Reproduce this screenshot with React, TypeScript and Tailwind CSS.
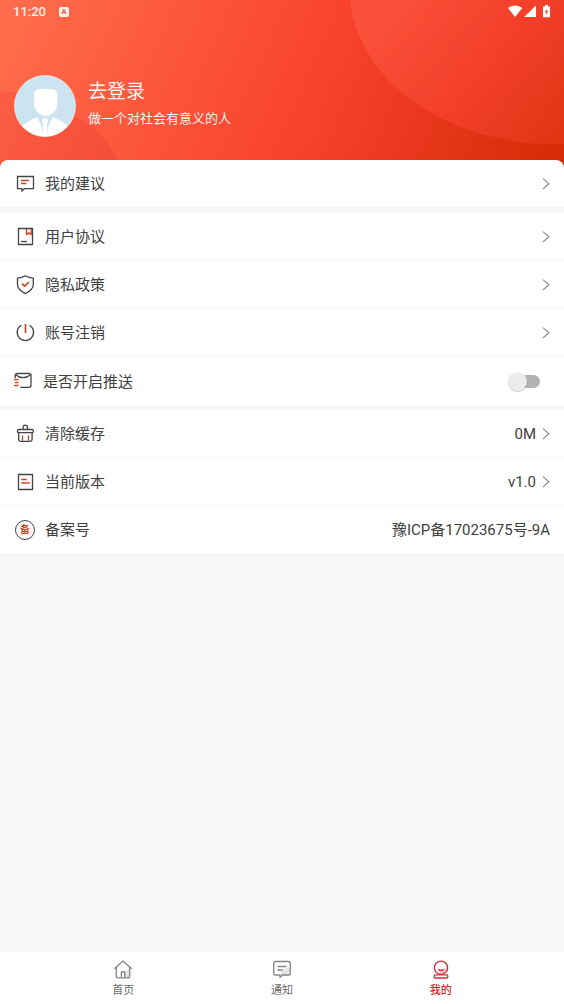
import React, { useState } from 'react';
import clsx from 'clsx';

const DARK = '#444';
const ACCENT = '#cf4524';

const HeaderBackground = () => (
  <svg
    className="absolute inset-0 w-full h-full"
    viewBox="0 0 564 168"
    preserveAspectRatio="none"
    aria-hidden="true"
  >
    <defs>
      <linearGradient id="base" gradientUnits="userSpaceOnUse" x1="20" y1="0" x2="536" y2="230">
        <stop offset="0" stopColor="#ff6c4b" />
        <stop offset="0.54" stopColor="#f8422e" />
        <stop offset="1" stopColor="#d42a06" />
      </linearGradient>
      <linearGradient id="bubble" gradientUnits="userSpaceOnUse" x1="380" y1="0" x2="560" y2="150">
        <stop offset="0" stopColor="#fa523a" />
        <stop offset="0.5" stopColor="#f3402b" />
        <stop offset="1" stopColor="#df3412" />
      </linearGradient>
      <linearGradient id="corner" gradientUnits="userSpaceOnUse" x1="0" y1="100" x2="118" y2="160">
        <stop offset="0" stopColor="#fb5d42" />
        <stop offset="1" stopColor="#f54d36" />
      </linearGradient>
    </defs>
    <rect width="564" height="168" fill="url(#base)" />
    <path
      d="M350 0C352 18 357 33 365 47C373 63 385 78 399 90C414 103 431 114 449 122C465 129 482 135 499 138C516 142 533 145 564 144V0Z"
      fill="url(#bubble)"
    />
    <path d="M0 91C12 91 23 93 33 97C49 101 64 108 77 117C86 122 94 127 100 133C108 141 114 151 120 168H0Z" fill="url(#corner)" />
  </svg>
);

const StatusIcons = () => (
  <svg className="w-[43px] h-[14px]" viewBox="0 0 43 14" fill="#fff" aria-hidden="true">
    <path d="M0 3.100C4.200-.3 10-.3 14.200 3.100L7.100 12Z" />
    <path d="M28 .5V12H16.200Z" />
    <path d="M37 0h3v1.400h2v10.800h-7V1.400h2z" />
    <path d="M39.400 3.400 36.700 7.300h1.600l-.8 3.200 2.800-4.300h-1.600z" fill="#ea3a22" />
  </svg>
);

const Avatar = () => (
  <svg className="w-[62px] h-[62px] shrink-0" viewBox="0 0 62 62" aria-hidden="true">
    <defs>
      <linearGradient id="sky" x1="0" y1="0" x2="0" y2="1">
        <stop offset="0" stopColor="#cbe5f1" />
        <stop offset="1" stopColor="#cde3ef" />
      </linearGradient>
      <clipPath id="round">
        <circle cx="31" cy="31" r="30.5" />
      </clipPath>
    </defs>
    <circle cx="31" cy="31" r="30.5" fill="url(#sky)" />
    <g clipPath="url(#round)" fill="#fff">
      <path d="M20 20c0-4 3-6 6-6h11c4 0 6.500 2 6.500 6v8c0 7-6 13-11.700 13S20 35 20 28z" />
      <path d="M7 53c3-6 11-8 16-11l4.500 9 1.500 11H7z" />
      <path d="M55 53c-3-6-11-8-16-11l-4.500 9L33 62h22z" />
      <path d="M29 43.500h4l1.200 2.500-1.500 3L34 62h-6l1.300-13-1.500-3z" />
    </g>
    <circle cx="31" cy="31" r="30.500" fill="none" stroke="#f3e9ea" strokeWidth="0.8" />
  </svg>
);

const Icon = ({ children }: { children: React.ReactNode }) => (
  <svg
    className="w-5 h-5 shrink-0"
    viewBox="0 0 20 20"
    fill="none"
    stroke={DARK}
    strokeWidth="1.3"
    strokeLinejoin="round"
    aria-hidden="true"
  >
    {children}
  </svg>
);

const icons = {
  suggest: (
    <Icon>
      <path d="M2.500 2.500h16v12.200H9.500L7 16.900V14.700H2.500z" strokeLinejoin="miter" />
      <path d="M6 6.500h8M6 9.500h5.400" stroke={ACCENT} strokeWidth="1.500" />
    </Icon>
  ),
  agreement: (
    <Icon>
      <path d="M3.500 1.500h14v16h-14z" strokeLinejoin="miter" />
      <path d="M11.500 2v5.600l2.300-1.800 2.400 1.800V2" stroke={ACCENT} strokeWidth="1.400" />
      <path d="M6 14.500h6" />
    </Icon>
  ),
  privacy: (
    <Icon>
      <path d="M10.400.8C12.700 2.200 15.400 3 18.300 3.200V9.500c0 4-3.600 6.900-7.900 9.100C6 16.400 2.500 13.500 2.500 9.500V3.200c2.800-.2 5.600-1 7.900-2.400z" />
      <path d="m7 8.700 2.600 2.500 4.200-4" stroke={ACCENT} strokeWidth="1.700" />
    </Icon>
  ),
  power: (
    <Icon>
      <path d="M6.300 2.300A8.200 8.200 0 1 0 14.500 2.300" />
      <path d="M10.500 1v9" stroke={ACCENT} strokeWidth="1.700" />
    </Icon>
  ),
  push: (
    <Icon>
      <path d="M2.200 7V4.500c0-1.300.8-2 2-2h11.800c1.200 0 2 .7 2 2v9.800c0 1.200-.8 2-2 2H7.200" />
      <path d="M2.700 3.800c2.200 2 4.700 2.900 7.400 2.900s5.200-.9 7.400-2.900" />
      <path d="M1 8.500h4.600M2 11.500h3.600M1 14.500h4.600" stroke={ACCENT} strokeWidth="1.400" />
    </Icon>
  ),
  clear: (
    <Icon>
      <path d="M8.200 5.500V3.200a2.100 2.100 0 0 1 4.200 0V5.500" />
      <rect x="2.500" y="5.500" width="15.800" height="3.200" rx="1.200" />
      <path d="M3.700 8.800v6.700c0 1 .8 1.800 1.800 1.800h9.800c1 0 1.800-.8 1.800-1.800V8.800" />
      <path d="M7.500 11.500v5.200M13.500 11.500v5.200" stroke={ACCENT} />
    </Icon>
  ),
  version: (
    <Icon>
      <path d="M3.500 2.500h14v15h-14z" strokeLinejoin="miter" />
      <path d="M6.300 7.500h5.500M6.300 11h8.500" stroke={ACCENT} strokeWidth="1.400" />
    </Icon>
  ),
  record: (
    <span className="flex items-center justify-center w-5 h-5 shrink-0 rounded-full border border-[#444] text-[10px] leading-none font-bold text-[#cf4524]">
      备
    </span>
  ),
};

const Chevron = () => (
  <svg className="w-2 h-3 shrink-0" viewBox="0 0 8 12" fill="none" stroke="#8f8f8f" strokeWidth="1.200" aria-hidden="true">
    <path d="M1 .6 6.900 5.800 1 11" />
  </svg>
);

interface RowProps {
  icon: React.ReactNode;
  label: string;
  value?: string;
}

const rowClass = 'flex items-center w-full h-12 pl-[15px] pr-[14px] gap-[10px] border-b border-[#f7f7f7] bg-white text-left';

const LinkRow = ({ icon, label, value }: RowProps) => (
  <li>
    <button type="button" className={rowClass}>
      {icon}
      <span className="pt-px">{label}</span>
      <span className="flex items-center ml-auto gap-1.5">
        <span className="pt-px">{value}</span>
        <Chevron />
      </span>
    </button>
  </li>
);

const tabs = [
  {
    id: 'home',
    label: '首页',
    icon: (
      <>
        <path d="M11 11.500l5.500-3v9.700h-5.500z" fill="#e6e6e6" stroke="none" />
        <path d="M1.300 8.800 10 1l8.700 7.800M3.300 7.500v8.700c0 1 .6 1.600 1.600 1.600h10.200c1 0 1.600-.6 1.600-1.600V7.500" />
        <path d="M8.400 17.500v-5.500h3.300v5.500" />
      </>
    ),
  },
  {
    id: 'notice',
    label: '通知',
    icon: (
      <>
        <path d="M9 11l9-4.500v8.500H9z" fill="#e6e6e6" stroke="none" />
        <path d="M3.300 1.500h13.400c1 0 1.600.6 1.600 1.600v10.300c0 1-.6 1.600-1.600 1.600H10.500L8 17.500v-2.500H3.300c-1 0-1.600-.6-1.600-1.600V3.100c0-1 .6-1.600 1.600-1.600z" />
        <path d="M5.500 6.500h9M5.500 10h5.500" />
      </>
    ),
  },
  {
    id: 'mine',
    label: '我的',
    icon: (
      <>
        <path d="M6.500 10c3 .5 6-.5 9-2.500 0 3-2 6-5.500 6z" fill="#f7b9bd" stroke="none" />
        <circle cx="10" cy="7.700" r="6.600" />
        <path d="M7.500 9.300c1.200 1.300 3.800 1.300 5 0" />
        <rect x="3.200" y="14.800" width="13.600" height="3.200" rx="1.200" />
      </>
    ),
  },
];

export default function App() {
  const [push, setPush] = useState(false);
  const [tab, setTab] = useState('mine');

  return (
    <div className="flex flex-col min-h-screen bg-[#f7f7f7] text-[15px] leading-6 text-[#404040] font-[Roboto,'Noto_Sans_CJK_SC',sans-serif]">
      {/* Header */}
      <header className="relative isolate pb-[31px] text-white">
        <div className="absolute inset-0 -z-10">
          <HeaderBackground />
        </div>
        <div className="flex items-center h-6 px-[13px]">
          <span className="text-[13px] leading-6 font-medium text-white/90">11:20</span>
          <span className="flex items-center justify-center w-[10px] h-[10px] ml-[13px] rounded-xs bg-white/90 text-[8px] leading-none font-bold text-[#f0583c]">
            A
          </span>
          <span className="ml-auto">
            <StatusIcons />
          </span>
        </div>
        <a href="#login" className="flex items-start gap-3 pl-[14px] pt-[51px]">
          <Avatar />
          <span className="flex flex-col pt-[3px] text-white/95">
            <span className="text-[19px] leading-7">去登录</span>
            <span className="text-[13px] leading-[26px]">做一个对社会有意义的人</span>
          </span>
        </a>
      </header>

      {/* Menu */}
      <main className="relative flex flex-col gap-[5px] -mt-2">
        <ul className="overflow-hidden rounded-t-lg">
          <LinkRow icon={icons.suggest} label="我的建议" />
        </ul>
        <ul>
          <LinkRow icon={icons.agreement} label="用户协议" />
          <LinkRow icon={icons.privacy} label="隐私政策" />
          <LinkRow icon={icons.power} label="账号注销" />
          <li>
            <label className="flex items-center h-12 pl-[13px] pr-6 gap-[10px] bg-white">
              {icons.push}
              <span className="pt-px">是否开启推送</span>
              <input
                type="checkbox"
                role="switch"
                checked={push}
                onChange={(e) => setPush(e.target.checked)}
                className="relative appearance-none w-7 h-[13px] ml-auto rounded-full bg-[#b2b2b2] checked:bg-red-300 before:absolute before:-left-1 before:-top-[3px] before:w-[19px] before:h-[19px] before:rounded-full before:bg-[#ececec] before:shadow-[0_1px_1px_rgba(0,0,0,0.2)] checked:before:left-3"
              />
            </label>
          </li>
        </ul>
        <ul>
          <LinkRow icon={icons.clear} label="清除缓存" value="0M" />
          <LinkRow icon={icons.version} label="当前版本" value="v1.0" />
          <li className={rowClass}>
            {icons.record}
            <span className="pt-px">备案号</span>
            <span className="ml-auto pt-px">豫ICP备17023675号-9A</span>
          </li>
        </ul>
      </main>

      {/* Bottom tabs */}
      <nav className="flex h-[52px] mt-auto px-11 bg-white">
        {tabs.map((t) => (
          <button
            key={t.id}
            type="button"
            onClick={() => setTab(t.id)}
            className={clsx(
              'flex flex-col flex-1 items-center pt-2 text-[11px] leading-[22px]',
              tab === t.id ? 'font-medium text-[#cf1f2e]' : 'text-[#6b6b6b]'
            )}
          >
            <svg
              className="w-5 h-5"
              viewBox="0 0 20 20"
              fill="none"
              stroke={tab === t.id ? '#cf2a35' : '#858585'}
              strokeWidth="1.300"
              strokeLinejoin="round"
              aria-hidden="true"
            >
              {t.icon}
            </svg>
            {t.label}
          </button>
        ))}
      </nav>
    </div>
  );
}
